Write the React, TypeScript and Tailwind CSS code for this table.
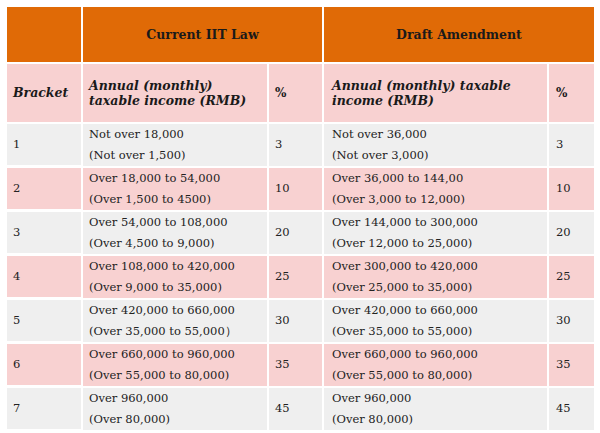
import React from "react";

const rows = [
  { b: "1", cur: ["Not over 18,000", "(Not over 1,500)"], cp: "3", dr: ["Not over 36,000", "(Not over 3,000)"], dp: "3" },
  { b: "2", cur: ["Over 18,000 to 54,000", "(Over 1,500 to 4500)"], cp: "10", dr: ["Over 36,000 to 144,00", "(Over 3,000 to 12,000)"], dp: "10" },
  { b: "3", cur: ["Over 54,000 to 108,000", "(Over 4,500 to 9,000)"], cp: "20", dr: ["Over 144,000 to 300,000", "(Over 12,000 to 25,000)"], dp: "20" },
  { b: "4", cur: ["Over 108,000 to 420,000", "(Over 9,000 to 35,000)"], cp: "25", dr: ["Over 300,000 to 420,000", "(Over 25,000 to 35,000)"], dp: "25" },
  { b: "5", cur: ["Over 420,000 to 660,000", "(Over 35,000 to 55,000）"], cp: "30", dr: ["Over 420,000 to 660,000", "(Over 35,000 to 55,000)"], dp: "30" },
  { b: "6", cur: ["Over 660,000 to 960,000", "(Over 55,000 to 80,000)"], cp: "35", dr: ["Over 660,000 to 960,000", "(Over 55,000 to 80,000)"], dp: "35" },
  { b: "7", cur: ["Over 960,000", "(Over 80,000)"], cp: "45", dr: ["Over 960,000", "(Over 80,000)"], dp: "45" },
];

export default function App() {
  return (
    <div className="w-[600px] h-[433px] bg-white pt-[7px] pl-[7px] font-['DejaVu_Serif',Georgia,serif] text-[#222]">
      <div className="grid grid-cols-[74px_184px_53px_223px_45px] gap-[2px] text-[11.5px]">
        <div className="h-[55px] bg-[#e06a06]" />
        <div className="col-span-2 bg-[#e06a06] flex items-center justify-center pt-[2px] font-bold text-[12.5px] text-[#1a1a1a]">
          Current IIT Law
        </div>
        <div className="col-span-2 bg-[#e06a06] flex items-center justify-center pt-[2px] font-bold text-[12.5px] text-[#1a1a1a]">
          Draft Amendment
        </div>

        <div className="h-[58px] bg-[#f8d1d1] flex items-center pl-[6px] font-bold italic text-[12.5px] text-[#1a1a1a]">Bracket</div>
        <div className="bg-[#f8d1d1] flex items-center pl-[6px] font-bold italic text-[12.5px] leading-[15px] text-[#1a1a1a]">
          <span>Annual (monthly)<br />taxable income (RMB)</span>
        </div>
        <div className="bg-[#f8d1d1] flex items-center pl-[6px] font-bold text-[12px] text-[#1a1a1a]">%</div>
        <div className="bg-[#f8d1d1] flex items-center pl-[8px] font-bold italic text-[12.5px] leading-[15px] text-[#1a1a1a]">
          <span>Annual (monthly) taxable<br />income (RMB)</span>
        </div>
        <div className="bg-[#f8d1d1] flex items-center pl-[7px] font-bold text-[12px] text-[#1a1a1a]">%</div>

        {rows.map((r, i) => {
          const bg = i % 2 === 0 ? "bg-[#efefef]" : "bg-[#f8d1d1]";
          return (
            <React.Fragment key={r.b}>
              <div className={`${bg} h-[41px] flex items-center pl-[6px]`}>{r.b}</div>
              <div className={`${bg} flex flex-col justify-center pl-[6px] leading-[21px]`}>
                <span>{r.cur[0]}</span>
                <span>{r.cur[1]}</span>
              </div>
              <div className={`${bg} flex items-center pl-[6px]`}>{r.cp}</div>
              <div className={`${bg} flex flex-col justify-center pl-[8px] leading-[21px]`}>
                <span>{r.dr[0]}</span>
                <span>{r.dr[1]}</span>
              </div>
              <div className={`${bg} flex items-center pl-[7px]`}>{r.dp}</div>
            </React.Fragment>
          );
        })}
      </div>
    </div>
  );
}
